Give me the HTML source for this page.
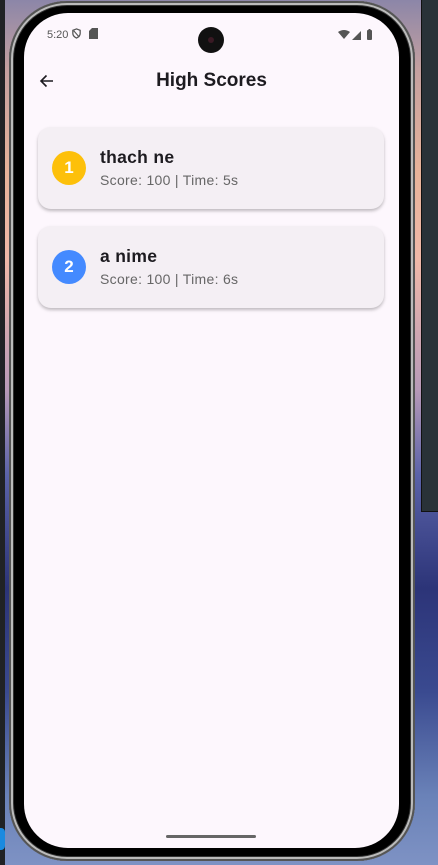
<!DOCTYPE html>
<html><head><style>
*{margin:0;padding:0;box-sizing:border-box}
body{width:438px;height:865px;overflow:hidden;position:relative;font-family:"Liberation Sans",Roboto,sans-serif;
background:linear-gradient(180deg,#8c86a8 0%,#c4a0a0 8%,#e8b39a 20%,#f0b8a8 30%,#b89ab8 45%,#5a62a8 55%,#2c3478 68%,#3a4a90 80%,#6a82b8 92%,#7e92c4 100%);}
.lstrip{position:absolute;left:0;top:0;width:5px;height:865px;background:#202225}
.lblue{position:absolute;left:0;top:828px;width:5px;height:22px;background:#1a8ae0;border-radius:0 4px 4px 0}
.rpanel{position:absolute;left:421px;top:0;width:17px;height:512px;background:#293238;border-left:1px solid #111;border-bottom:1px solid #111}
.frame{position:absolute;left:9px;top:1px;width:406px;height:860px;border-radius:58px;background:#000;
box-shadow:inset 0 0 0 2px #555,inset 0 0 0 4px #bbb,inset 0 0 0 5px #333}
.screen{position:absolute;left:24px;top:13px;width:375px;height:835px;border-radius:44px;background:#fdf7fd;overflow:hidden}
.status{position:absolute;top:15px;left:23px;font-size:11px;color:#555}
.cam{position:absolute;left:174px;top:14px;width:26px;height:26px;border-radius:50%;background:#111}
.cam:after{content:"";position:absolute;left:10px;top:10px;width:6px;height:6px;border-radius:50%;background:#3a1a24}
.title{position:absolute;top:57px;left:0;width:375px;text-align:center;font-size:19px;font-weight:bold;color:#1d1b20}
.card{position:absolute;left:14px;width:346px;height:82px;background:#f4eff4;border-radius:13px;box-shadow:0 2px 3px rgba(0,0,0,.25)}
.circ{position:absolute;left:14px;top:24px;width:34px;height:34px;border-radius:50%;color:#fff;font-weight:bold;font-size:17px;text-align:center;line-height:34px}
.name{position:absolute;left:62px;top:20px;font-size:17.5px;font-weight:bold;color:#1d1b20;letter-spacing:.3px}
.sub{position:absolute;left:62px;top:45px;font-size:14px;color:#666;letter-spacing:.3px}
.home{position:absolute;left:142px;top:822px;width:90px;height:3px;border-radius:2px;background:#666}
</style></head><body>
<div class="lstrip"></div><div class="lblue"></div>
<div class="rpanel"></div>
<div class="frame"></div>
<div class="screen">
 <div class="status">5:20 <svg width="11" height="11" viewBox="0 0 12 12" style="vertical-align:-1px"><path d="M6 1L2 2.5V6c0 2.5 2 4 4 5 2-1 4-2.5 4-5V2.5z" fill="none" stroke="#555" stroke-width="1.4"/><path d="M3 3l6 7" stroke="#555" stroke-width="1.2"/></svg> <svg width="9" height="11" viewBox="0 0 9 11" style="vertical-align:-1px;margin-left:3px"><path d="M3 0h6v11H0V3z" fill="#555"/></svg></div>
 <svg style="position:absolute;left:314px;top:16px" width="38" height="12" viewBox="0 0 38 12"><path d="M0 3Q6-1 12 3L6 10z" fill="#555"/><path d="M14 11L23 2v9z" fill="#555"/><rect x="29" y="1" width="5" height="10" rx="1" fill="#555"/><rect x="30.5" y="0" width="2" height="2" fill="#555"/></svg>
 <div class="cam"></div>
 <svg style="position:absolute;left:14px;top:59px" width="18" height="18" viewBox="0 0 18 18"><path d="M15 9H3M8.5 3.5L3 9l5.5 5.5" fill="none" stroke="#1d1b20" stroke-width="1.6"/></svg>
 <div class="title">High Scores</div>
 <div class="card" style="top:114px"><div class="circ" style="background:#fdc00a">1</div><div class="name">thach ne</div><div class="sub">Score: 100 | Time: 5s</div></div>
 <div class="card" style="top:213px"><div class="circ" style="background:#448aff">2</div><div class="name">a nime</div><div class="sub">Score: 100 | Time: 6s</div></div>
 <div class="home"></div>
</div>
</body></html>
